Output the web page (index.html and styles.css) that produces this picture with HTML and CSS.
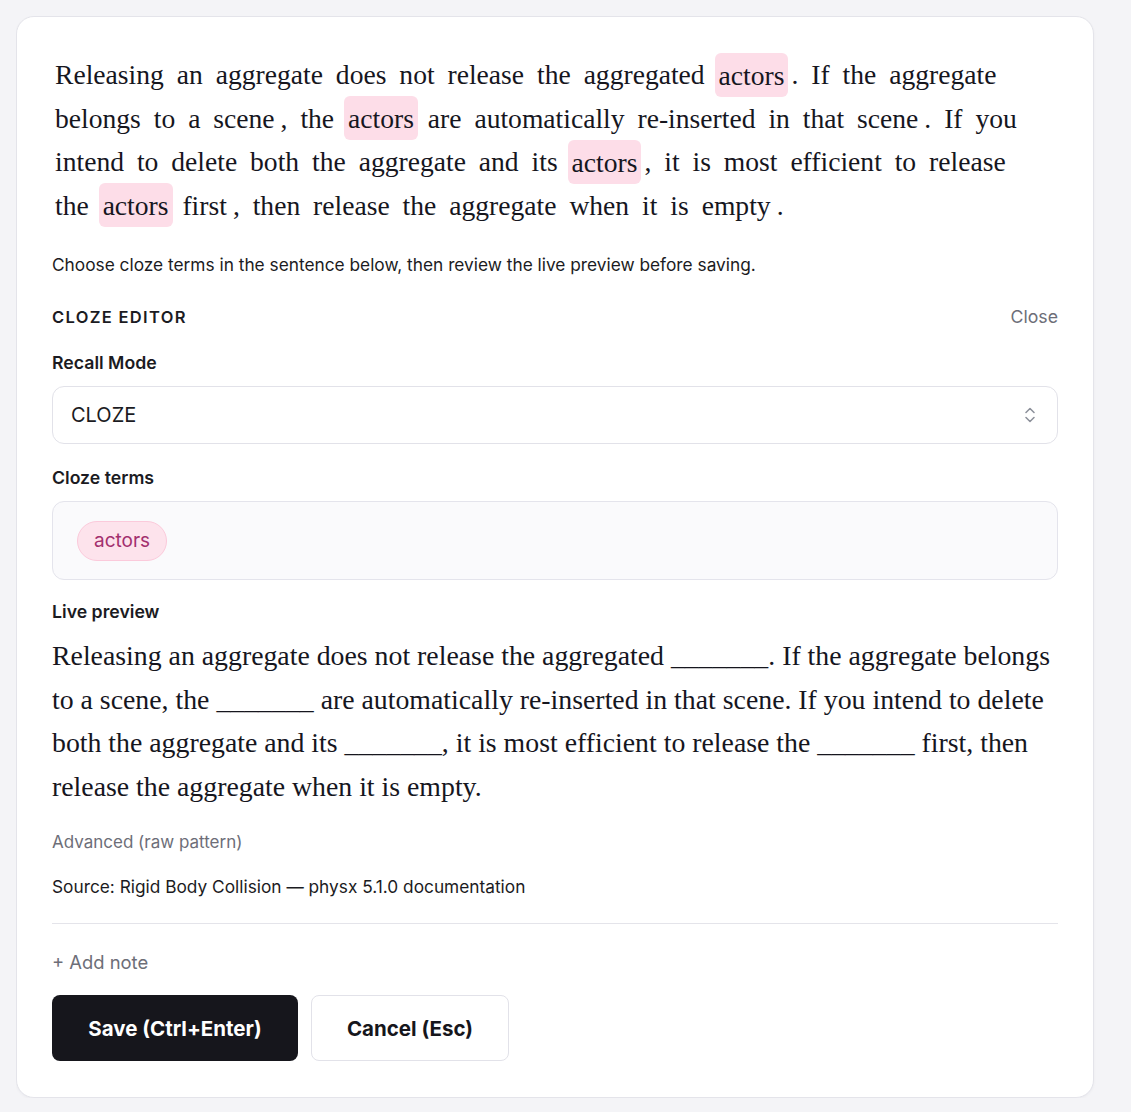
FILE: index.html
```html
<!DOCTYPE html>
<html lang="en">
<head>
  <meta charset="UTF-8">
  <title>Cloze Editor</title>
  <link rel="stylesheet" href="styles.css">
</head>
<body>
  <div class="card">
    <p class="sentence">
      <span class="tok">Releasing</span> <span class="tok">an</span> <span class="tok">aggregate</span> <span class="tok">does</span> <span class="tok">not</span> <span class="tok">release</span> <span class="tok">the</span> <span class="tok">aggregated</span> <span class="tok hl">actors</span><span class="tok">.</span> <span class="tok">If</span> <span class="tok">the</span> <span class="tok">aggregate</span>
      <span class="tok">belongs</span> <span class="tok">to</span> <span class="tok">a</span> <span class="tok">scene</span><span class="tok">,</span> <span class="tok">the</span> <span class="tok hl">actors</span> <span class="tok">are</span> <span class="tok">automatically</span> <span class="tok">re-inserted</span> <span class="tok">in</span> <span class="tok">that</span> <span class="tok">scene</span><span class="tok">.</span> <span class="tok">If</span> <span class="tok">you</span>
      <span class="tok">intend</span> <span class="tok">to</span> <span class="tok">delete</span> <span class="tok">both</span> <span class="tok">the</span> <span class="tok">aggregate</span> <span class="tok">and</span> <span class="tok">its</span> <span class="tok hl">actors</span><span class="tok">,</span> <span class="tok">it</span> <span class="tok">is</span> <span class="tok">most</span> <span class="tok">efficient</span> <span class="tok">to</span> <span class="tok">release</span>
      <span class="tok">the</span> <span class="tok hl">actors</span> <span class="tok">first</span><span class="tok">,</span> <span class="tok">then</span> <span class="tok">release</span> <span class="tok">the</span> <span class="tok">aggregate</span> <span class="tok">when</span> <span class="tok">it</span> <span class="tok">is</span> <span class="tok">empty</span><span class="tok">.</span>
    </p>

    <p class="hint">Choose cloze terms in the sentence below, then review the live preview before saving.</p>

    <div class="editor-head">
      <span class="editor-title">CLOZE EDITOR</span>
      <span class="link">Close</span>
    </div>

    <div class="label">Recall Mode</div>
    <div class="select">
      <span>CLOZE</span>
      <svg width="10" height="16" viewBox="0 0 10 16"><path d="M1 5.5l4-4 4 4M1 10.5l4 4 4-4" fill="none" stroke="#8b8f99" stroke-width="1.5" stroke-linecap="round" stroke-linejoin="round"/></svg>
    </div>

    <div class="label">Cloze terms</div>
    <div class="terms">
      <span class="chip">actors</span>
    </div>

    <div class="label label-preview">Live preview</div>
    <p class="preview">Releasing an aggregate does not release the aggregated _______. If the aggregate belongs to a scene, the _______ are automatically re-inserted in that scene. If you intend to delete both the aggregate and its _______, it is most efficient to release the _______ first, then release the aggregate when it is empty.</p>

    <div class="advanced">Advanced (raw pattern)</div>
    <div class="source">Source: Rigid Body Collision — physx 5.1.0 documentation</div>

    <hr class="divider">

    <div class="add-note">+ Add note</div>

    <div class="actions">
      <button class="btn btn-save">Save (Ctrl+Enter)</button>
      <button class="btn btn-cancel">Cancel (Esc)</button>
    </div>
  </div>
</body>
</html>
```

FILE: styles.css
```css
body {
  margin: 16px;
  background-color: #f4f4f7;
  font-family: Inter, "Liberation Sans", sans-serif;
  color: #1b1b22;
}
.card {
  width: 1078px;
  box-sizing: border-box;
  background-color: #ffffff;
  border: 1px solid #e4e4ea;
  border-radius: 18px;
  padding: 36px 35px 36px;
  box-shadow: 0 1px 3px rgba(20, 20, 40, 0.04);
}
.sentence {
  margin: 0;
  padding-right: 16px;
  font-family: "Liberation Serif", serif;
  font-size: 27.6px;
  line-height: 43.5px;
  color: #16161e;
}
.tok {
  padding: 0 3px;
}
.hl {
  background-color: #fddde8;
  border-radius: 6px;
  padding: 6.5px 4px;
}
.hint {
  margin: 26px 0 0;
  font-size: 17.3px;
  line-height: 24px;
}
.editor-head {
  display: flex;
  justify-content: space-between;
  align-items: center;
  margin-top: 28px;
  line-height: 24px;
}
.editor-title {
  font-size: 16.5px;
  font-weight: 600;
  letter-spacing: 0.08em;
}
.link {
  font-size: 17.7px;
  color: #6d6e78;
}
.label {
  margin-top: 22px;
  font-size: 17.7px;
  font-weight: 600;
  line-height: 24px;
}
.select {
  display: flex;
  justify-content: space-between;
  align-items: center;
  margin-top: 11px;
  height: 58px;
  box-sizing: border-box;
  padding: 0 22px 0 18px;
  border: 1px solid #e2e2e9;
  border-radius: 12px;
  font-size: 20px;
}
.terms {
  margin-top: 11px;
  padding: 18.5px 24px;
  background-color: #fafafc;
  border: 1px solid #e4e4ec;
  border-radius: 12px;
  display: flex;
}
.chip {
  display: inline-flex;
  align-items: center;
  height: 40px;
  box-sizing: border-box;
  padding: 0 16px;
  background-color: #fde3ec;
  border: 1px solid #fbcadb;
  border-radius: 20px;
  color: #a3306e;
  font-size: 19px;
}
.label-preview {
  margin-top: 20px;
}
.preview {
  margin: 10px 0 0;
  font-family: "Liberation Serif", serif;
  font-size: 27.8px;
  line-height: 43.5px;
  color: #16161e;
}
.advanced {
  margin-top: 22px;
  font-size: 17px;
  line-height: 24px;
  color: #6d6e78;
}
.source {
  margin-top: 21px;
  font-size: 17.3px;
  line-height: 24px;
}
.divider {
  margin: 24px 0 0;
  border: none;
  border-top: 1px solid #e4e4ea;
}
.add-note {
  margin-top: 25px;
  font-size: 18.4px;
  line-height: 26px;
  color: #6d6e78;
}
.actions {
  display: flex;
  gap: 13px;
  margin-top: 20px;
}
.btn {
  height: 66px;
  border-radius: 8px;
  font-family: Inter, "Liberation Sans", sans-serif;
  font-size: 20.5px;
  font-weight: 700;
  cursor: pointer;
}
.btn-save {
  width: 246px;
  background-color: #16161c;
  color: #ffffff;
  border: none;
}
.btn-cancel {
  width: 198px;
  background-color: #ffffff;
  color: #16161c;
  border: 1px solid #e2e2e9;
}
```
